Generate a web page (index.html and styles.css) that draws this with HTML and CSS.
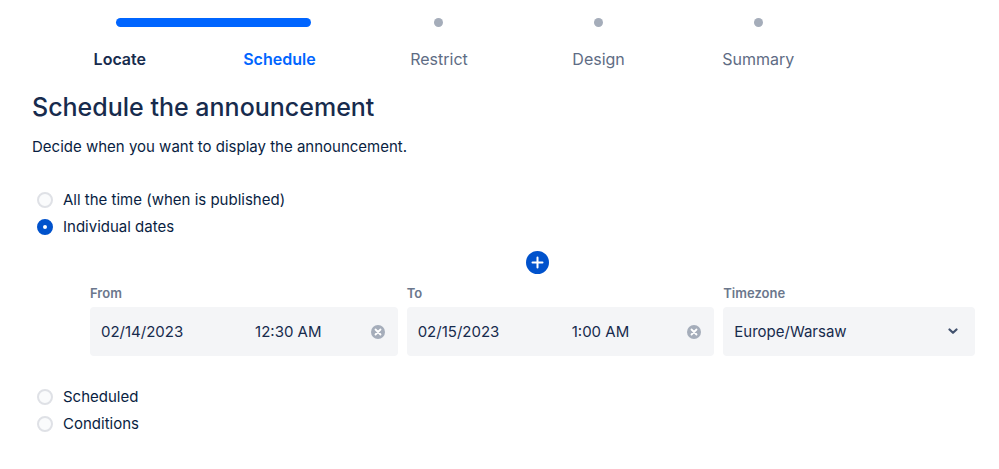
FILE: index.html
```
<!DOCTYPE html>
<html lang="en">
<head>
    <meta charset="UTF-8">
    <meta name="viewport" content="width=device-width, initial-scale=1.0">
    <title>Schedule the announcement</title>
    <link rel="stylesheet" href="styles.css">
</head>
<body>

    <ol class="steps">
        <li class="step done"><span class="bar"></span>Locate</li>
        <li class="step current" aria-current="step"><span class="spacer"></span>Schedule</li>
        <li class="step"><span class="dot"></span>Restrict</li>
        <li class="step"><span class="dot"></span>Design</li>
        <li class="step"><span class="dot"></span>Summary</li>
    </ol>

    <form class="schedule">
        <h1>Schedule the announcement</h1>
        <p class="intro">Decide when you want to display the announcement.</p>

        <div class="options">
            <label class="option"><input type="radio" name="when" value="always">All the time (when is published)</label>
            <label class="option"><input type="radio" name="when" value="dates" checked>Individual dates</label>
        </div>

        <div class="dates">
            <div class="add-row">
                <button type="button" class="add" aria-label="Add dates">
                    <svg width="13" height="13" viewBox="0 0 13 13"><path d="M6.5 1.5v10M1.5 6.5h10" stroke="#fff" stroke-width="2" stroke-linecap="round"/></svg>
                </button>
            </div>

            <div class="fields">
                <div class="field">
                    <label for="from-date">From</label>
                    <div class="picker">
                        <input class="date" id="from-date" type="text" value="02/14/2023">
                        <input class="time" type="text" value="12:30 AM" aria-label="From time">
                        <button type="button" class="clear" aria-label="Clear from">
                            <svg width="14" height="14" viewBox="0 0 14 14"><circle cx="7" cy="7" r="7" fill="#a5adba"/><path d="M4.5 4.5l5 5M9.5 4.5l-5 5" stroke="#fff" stroke-width="1.8" stroke-linecap="round"/></svg>
                        </button>
                    </div>
                </div>
                <div class="field">
                    <label for="to-date">To</label>
                    <div class="picker">
                        <input class="date" id="to-date" type="text" value="02/15/2023">
                        <input class="time" type="text" value="1:00 AM" aria-label="To time">
                        <button type="button" class="clear" aria-label="Clear to">
                            <svg width="14" height="14" viewBox="0 0 14 14"><circle cx="7" cy="7" r="7" fill="#a5adba"/><path d="M4.5 4.5l5 5M9.5 4.5l-5 5" stroke="#fff" stroke-width="1.8" stroke-linecap="round"/></svg>
                        </button>
                    </div>
                </div>
                <div class="field">
                    <label for="timezone">Timezone</label>
                    <div class="picker">
                        <select id="timezone">
                            <option>Europe/Warsaw</option>
                        </select>
                        <svg class="chevron" width="10" height="7" viewBox="0 0 10 7"><path d="M1.5 1.5L5 4.8l3.5-3.3" fill="none" stroke="#42526e" stroke-width="2.2" stroke-linecap="round" stroke-linejoin="round"/></svg>
                    </div>
                </div>
            </div>
        </div>

        <div class="options">
            <label class="option"><input type="radio" name="when" value="scheduled">Scheduled</label>
            <label class="option"><input type="radio" name="when" value="conditions">Conditions</label>
        </div>
    </form>

</body>
</html>
```

FILE: styles.css
```
* {
    box-sizing: border-box;
}

body {
    margin: 0;
    padding: 18px 24px 24px 32px;
    background: #fff;
    color: #091e42;
    font-family: Inter, sans-serif;
    font-size: 15px;
    line-height: 24px;
}

.steps {
    display: grid;
    grid-template-columns: repeat(5, 1fr);
    width: 86%;
    margin: 0;
    padding: 0 5px 0 8px;
    font-size: 16px;
    list-style: none;
}

.step {
    display: flex;
    flex-direction: column;
    align-items: center;
    gap: 20px;
    color: #5e6c84;
}

.step.done {
    color: #172b4d;
    font-weight: 600;
}

.step.current {
    color: #0065ff;
    font-weight: 600;
}

.dot,
.spacer {
    width: 9px;
    height: 9px;
    border-radius: 50%;
}

.dot {
    background: #a5adba;
}

/* runs from the first step on past the current one */
.bar {
    align-self: flex-start;
    width: 122%;
    height: 9px;
    margin-left: calc(50% - 4px);
    border-radius: 5px;
    background: #0065ff;
}

h1 {
    margin: 20px 0 12px;
    color: #172b4d;
    font-size: 25px;
    font-weight: 500;
    line-height: 32px;
}

.intro {
    margin: 0 0 27px;
}

.options {
    display: flex;
    flex-direction: column;
    align-items: flex-start;
    padding-left: 5px;
}

.option {
    display: flex;
    align-items: center;
    gap: 10px;
    line-height: 27px;
}

.option input {
    appearance: none;
    width: 16px;
    height: 16px;
    margin: 0;
    border: 2px solid #dfe1e6;
    border-radius: 50%;
    background: #fafbfc;
}

.option input:checked {
    border: 6px solid #0052cc;
    background: #fff;
}

.dates {
    padding: 11px 0 27px 58px;
}

.add-row {
    display: flex;
    justify-content: center;
    padding-left: 9px;
}

.add {
    display: flex;
    align-items: center;
    justify-content: center;
    width: 23px;
    height: 23px;
    padding: 0;
    border: 0;
    border-radius: 50%;
    background: #0052cc;
    cursor: pointer;
}

.fields {
    display: grid;
    grid-template-columns: 11fr 11fr 9fr;
    gap: 9px;
    margin-top: 11px;
}

.field {
    min-width: 0;
}

.field label {
    display: block;
    margin-bottom: 6px;
    color: #6b778c;
    font-size: 13px;
    font-weight: 600;
    line-height: 16px;
}

.picker {
    display: flex;
    align-items: center;
    height: 49px;
    padding: 0 13px 0 11px;
    border-radius: 4px;
    background: #f4f5f7;
}

.picker input,
.picker select {
    min-width: 0;
    height: 100%;
    padding: 0;
    border: 0;
    background: none;
    color: #172b4d;
    font: inherit;
}

.picker input.date {
    flex: 4;
}

.picker input.time {
    flex: 3;
}

.picker select {
    flex: 1;
    appearance: none;
}

.clear {
    display: flex;
    padding: 0;
    border: 0;
    background: none;
    cursor: pointer;
}

.chevron {
    margin-right: 4px;
    pointer-events: none;
}
```
